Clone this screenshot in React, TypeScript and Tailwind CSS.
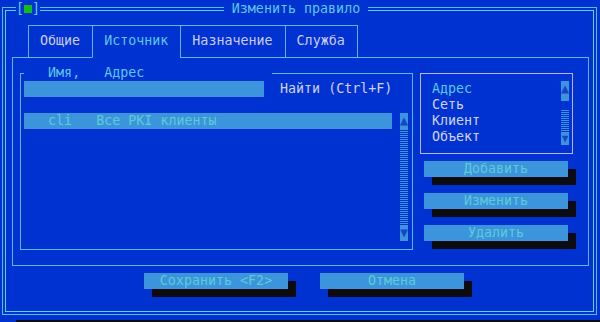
import React from "react";

const tabs = [
  { label: "Общие", active: false },
  { label: "Источник", active: true },
  { label: "Назначение", active: false },
  { label: "Служба", active: false },
];

const kinds = ["Адрес", "Сеть", "Клиент", "Объект"];

function Button({ label, className = "" }: { label: string; className?: string }) {
  return (
    <div
      className={`w-[144px] h-4 bg-[#3c95dc] text-[#5ccbd8] text-center shadow-[8px_8px_0_#0c0c10] ${className}`}
    >
      {label}
    </div>
  );
}

function Scrollbar({ track }: { track: number }) {
  return (
    <div className="w-[8px] flex flex-col overflow-hidden">
      <div className="h-4 bg-[#3c95dc] text-[#1446c8] text-center">▲</div>
      <div
        className="bg-[repeating-linear-gradient(to_bottom,#3c95dc_0px,#3c95dc_1px,#0032d2_1px,#0032d2_2px)]"
        style={{ height: track }}
      />
      <div className="h-4 bg-[#3c95dc] text-[#1446c8] text-center">▼</div>
    </div>
  );
}

export default function App() {
  return (
    <div className="relative w-[600px] h-[322px] overflow-hidden bg-[#0032d2] font-['DejaVu_Sans_Mono',monospace] text-[13.33px] leading-4 whitespace-pre">
      {/* Dialog frame (double line) */}
      <div className="ml-[2px] mt-[7px] w-[595px] h-[308px] border border-[#4fc2ee] p-[2px]">
        <div className="w-full h-full border border-[#5ad0f4] flex flex-col">
          {/* Tab strip */}
          <div className="mt-[14px] ml-[6px] mr-[4px] h-[33px] flex">
            <div className="w-[16px] border-b border-[#5ab8f0]" />
            {tabs.map((t, i) => (
              <div
                key={t.label}
                className={`pl-[11px] pr-[12px] pt-[7px] border-t border-l border-b border-t-[#5ab8f0] border-l-[#5ab8f0] ${
                  i === tabs.length - 1 ? "border-r border-r-[#5ab8f0]" : ""
                } ${t.active ? "border-b-[#0032d2] text-[#5ec8ec]" : "border-b-[#5ab8f0] text-[#ccccf2]"}`}
              >
                {t.label}
              </div>
            ))}
            <div className="flex-1 border-b border-[#5ab8f0]" />
          </div>

          {/* Tab body */}
          <div className="ml-[6px] mr-[4px] h-[208px] border-x border-b border-[#5ab8f0] flex items-start">
            {/* Address list */}
            <div className="ml-[7px] mt-[15px] w-[393px] h-[177px] border border-[#5ab8f0] flex flex-col">
              <div className="-mt-[9px] ml-[3px] w-[248px] h-4 bg-[#0032d2] text-[#5ec8ec]">{"   Имя,   Адрес"}</div>
              <div className="h-4 flex">
                <div className="ml-[3px] w-[240px] h-4 bg-[#3c95dc]" />
                <div className="ml-[16px] text-[#d2d2f4]">Найти (Ctrl+F)</div>
              </div>
              <div className="h-4" />
              <div className="flex">
                <div className="ml-[3px] w-[368px]">
                  <div className="h-4 bg-[#3c95dc] text-[#5ccbd8]">{"   cli   Все PKI клиенты"}</div>
                </div>
                <div className="ml-[8px]">
                  <Scrollbar track={96} />
                </div>
              </div>
            </div>

            {/* Right column */}
            <div className="ml-[7px] mt-[15px] flex flex-col">
              <div className="w-[153px] h-[81px] border border-[#bcb4ee] flex pt-[7px]">
                <div className="pl-[11px] flex flex-col">
                  {kinds.map((k, i) => (
                    <div key={k} className={i === 0 ? "text-[#5ec8ec]" : "text-[#d2d2f4]"}>
                      {k}
                    </div>
                  ))}
                </div>
                <div className="ml-auto mr-[3px] w-[8px] flex flex-col overflow-hidden">
                  <div className="h-4 bg-[#3c95dc] text-[#1446c8] text-center">▲</div>
                  <div className="h-[4px] bg-[#3c95dc]" />
                  <div className="h-[9px]" />
                  <div className="h-[23px] bg-[repeating-linear-gradient(to_bottom,#3c95dc_0px,#3c95dc_1px,#0032d2_1px,#0032d2_2px)]" />
                  <div className="h-[12px] bg-[#3c95dc] text-[#1446c8] text-[11px] leading-3 text-center">▼</div>
                </div>
              </div>
              <div className="ml-[4px] mt-[7px] flex flex-col gap-4">
                <Button label="Добавить" />
                <Button label="Изменить" />
                <Button label="Удалить" />
              </div>
            </div>
          </div>

          {/* Dialog buttons */}
          <div className="mt-[7px] ml-[138px] flex gap-[32px]">
            <Button label="Сохранить <F2>" />
            <Button label="Отмена" />
          </div>
        </div>
      </div>

      {/* Window shadow */}
      <div className="ml-[16px] mt-[5px] h-[4px] bg-[#0c0c10]" />

      {/* Title overlays on the frame */}
      <div className="absolute left-[16px] top-[1px] w-[24px] h-4 bg-[#0032d2] flex items-center text-[#5ad0f4]">
        <span className="w-[8px]">[</span>
        <span className="w-[8px] h-[8px] bg-[#12c012]" />
        <span className="w-[8px]">]</span>
      </div>
      <div className="absolute left-[224px] top-[1px] w-[144px] h-4 bg-[#0032d2] text-center text-[#5ec8ec]">
        Изменить правило
      </div>
    </div>
  );
}
